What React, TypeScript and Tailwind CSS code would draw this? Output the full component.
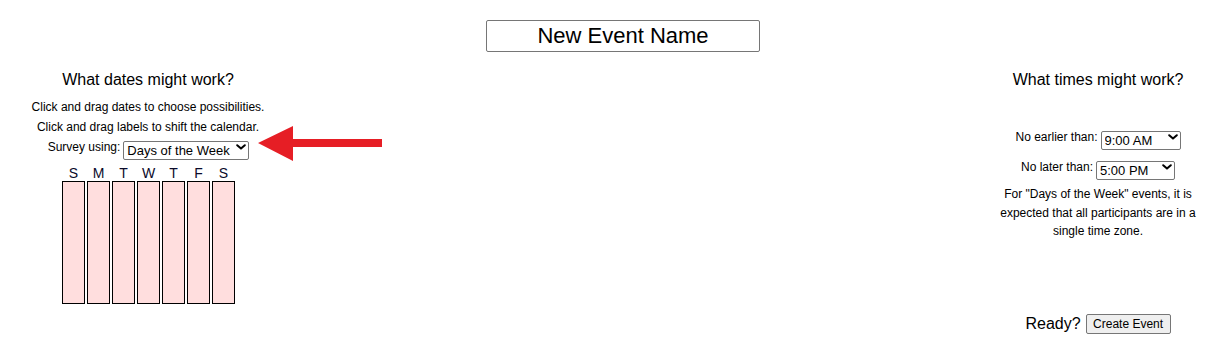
import React from "react";

const Chevron = () => (
  <svg width="10" height="6" viewBox="0 0 10 6" className="pointer-events-none absolute right-[3px] top-[6px]">
    <path d="M1.2 1.2 L5 4.6 L8.8 1.2" fill="none" stroke="#000" strokeWidth="2" strokeLinecap="round" strokeLinejoin="round" />
  </svg>
);

function Select({ value, options, w }: { value: string; options: string[]; w: string }) {
  return (
    <div className={`relative h-[19px] ${w}`}>
      <select
        defaultValue={value}
        className="h-[19px] w-full appearance-none rounded-[2px] border border-[#767676] bg-white pl-[3px] pr-[10px] text-[13px] leading-[17px] text-black outline-none"
        style={{ fontFamily: '"Liberation Sans", Arial, sans-serif' }}
      >
        {options.map((o) => (
          <option key={o}>{o}</option>
        ))}
      </select>
      <Chevron />
    </div>
  );
}

export default function App() {
  const days = ["S", "M", "T", "W", "T", "F", "S"];
  return (
    <div
      className="relative h-[356px] w-[1220px] overflow-hidden bg-white text-black"
      style={{ fontFamily: '"Liberation Sans", Arial, sans-serif' }}
    >
      <div className="flex justify-center pl-[26px] pt-[20px]">
        <input
          defaultValue="New Event Name"
          className="h-[32px] w-[274px] rounded-[2px] border border-[#767676] bg-white text-center text-[22px] leading-[30px] text-black outline-none"
          style={{ fontFamily: '"Liberation Sans", Arial, sans-serif' }}
        />
      </div>

      <div className="flex justify-between pr-[22px]">
        {/* Left column */}
        <div className="flex w-[296px] flex-col items-center">
          <div className="mt-[19px] h-[18px] text-[16px] leading-[18px]">What dates might work?</div>
          <div className="mt-[8px] text-[12px] leading-[20px]">Click and drag dates to choose possibilities.</div>
          <div className="text-[12px] leading-[20px]">Click and drag labels to shift the calendar.</div>
          <div className="flex h-[20px] items-center gap-[3px] pl-[1px]">
            <span className="text-[12px] leading-[20px]">Survey using:</span>
            <Select value="Days of the Week" options={["Specific Dates", "Days of the Week"]} w="w-[126px]" />
          </div>
          <div className="mt-[8px] flex gap-[2px] pl-[1px]">
            {days.map((d, i) => (
              <div key={i} className="flex w-[23px] flex-col items-center">
                <div className="h-[16px] text-[14px] leading-[16px] text-[#0a0a2a]">{d}</div>
                <div className="h-[123px] w-[23px] border-[1.5px] border-black bg-[#ffdede]" />
              </div>
            ))}
          </div>
        </div>

        {/* Right column */}
        <div className="flex w-[200px] flex-col items-center">
          <div className="mt-[19px] h-[18px] text-[16px] leading-[18px]">What times might work?</div>
          <div className="mt-[38px] flex h-[20px] items-center gap-[3px]">
            <span className="text-[12px]">No earlier than:</span>
            <Select value="9:00 AM" options={["9:00 AM"]} w="w-[80px]" />
          </div>
          <div className="mt-[10px] flex h-[20px] items-center gap-[3px]">
            <span className="text-[12px]">No later than:</span>
            <Select value="5:00 PM" options={["5:00 PM"]} w="w-[79px]" />
          </div>
          <p className="mt-[8px] text-center text-[12px] leading-[18.5px]">
            For "Days of the Week" events, it is expected that all participants are in a single time zone.
          </p>
          <div className="mt-[73px] flex h-[20px] items-center gap-[5px]">
            <span className="text-[16px]">Ready?</span>
            <button
              className="h-[20px] w-[85px] rounded-[2px] border border-[#767676] bg-[#efefef] text-[12px] leading-[18px] text-black"
              style={{ fontFamily: '"Liberation Sans", Arial, sans-serif' }}
            >
              Create Event
            </button>
          </div>
        </div>
      </div>

      {/* annotation arrow */}
      <svg className="absolute left-[255px] top-[125px]" width="130" height="38" viewBox="0 0 130 38">
        <polygon points="3,18 38,1 38,14 127,14 127,22 38,22 38,36" fill="#e61e25" />
      </svg>
    </div>
  );
}
